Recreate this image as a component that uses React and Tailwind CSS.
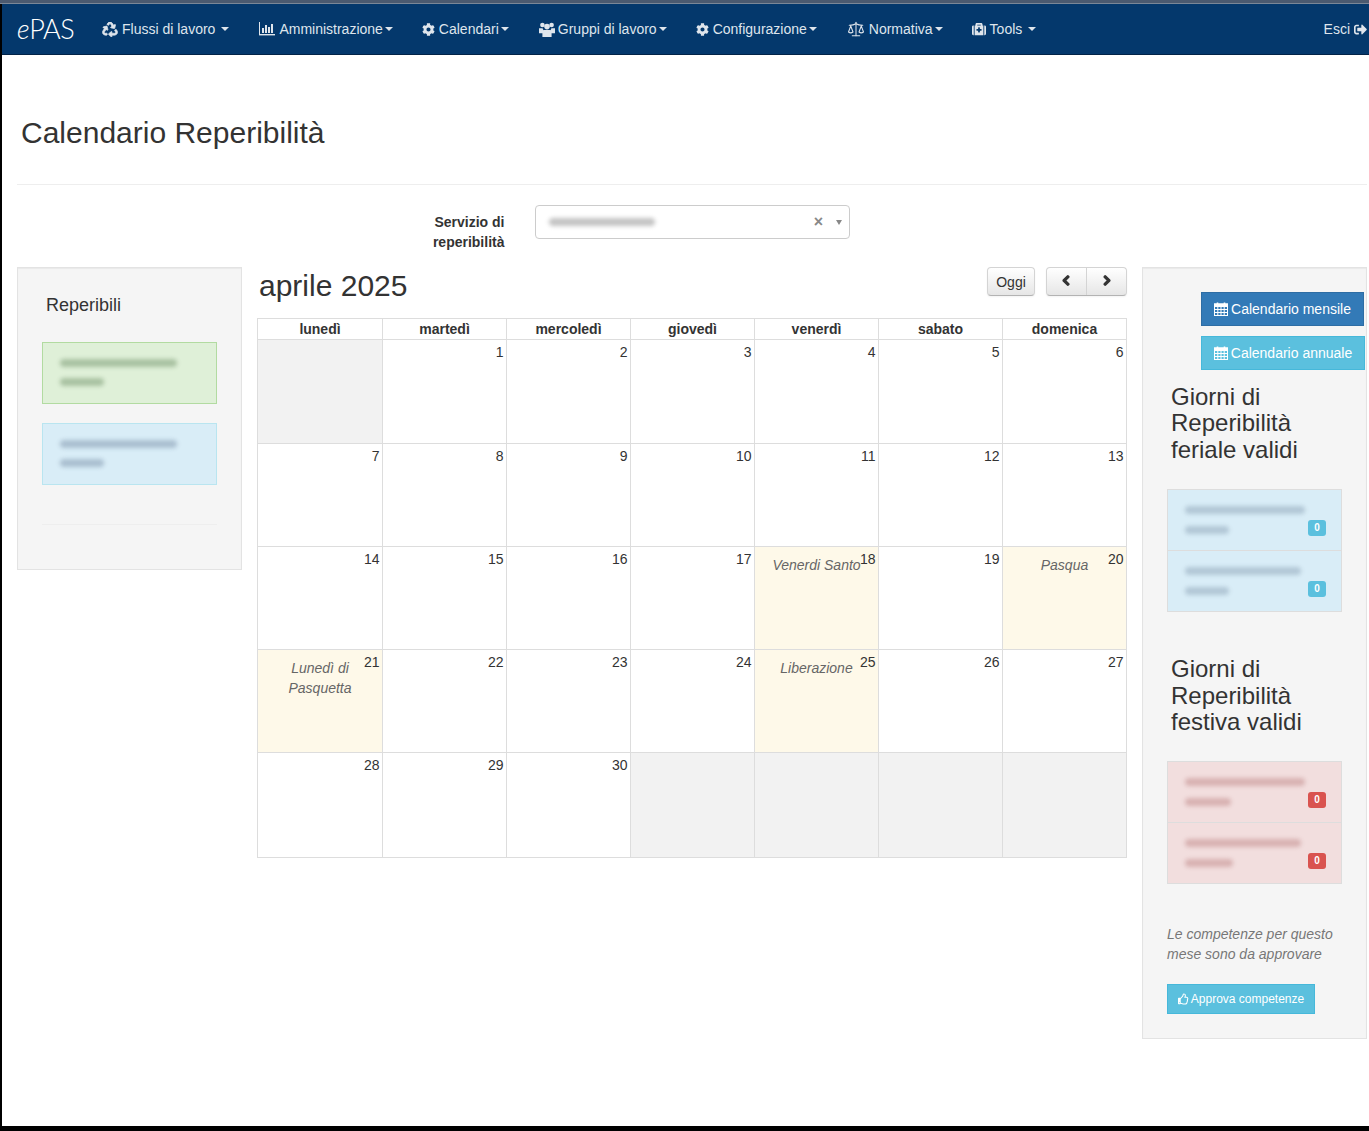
import React from "react";
import { FaRecycle, FaCog, FaMedkit, FaSignOutAlt, FaRegThumbsUp, FaChevronLeft, FaChevronRight } from "react-icons/fa";
import { Scale } from "lucide-react";

const ChartIcon = () => (
  <svg width="16" height="14" viewBox="0 0 16 14" className="fill-current">
    <rect x="0" y="0" width="1" height="12" />
    <rect x="0" y="12" width="16" height="1.4" />
    <rect x="3" y="6" width="2" height="5" />
    <rect x="6" y="3" width="2" height="8" />
    <rect x="9" y="5" width="2" height="6" />
    <rect x="12" y="2" width="2" height="9" />
  </svg>
);

const UsersIcon = () => (
  <svg width="16" height="15" viewBox="0 0 16 15" className="fill-current -mr-[1px]">
    <circle cx="3.4" cy="3" r="2.3" />
    <circle cx="12.6" cy="3" r="2.3" />
    <circle cx="8" cy="4.6" r="2.8" />
    <path d="M0 6.2h3.6l1 2.6v2.4H0z" />
    <path d="M16 6.2h-3.6l-1 2.6v2.4H16z" />
    <path d="M4.4 8h7.2l1 2.2V15H3.4v-4.8z" />
  </svg>
);

const CalendarIcon = () => (
  <svg width="14" height="14" viewBox="0 0 14 14" className="mr-[3px] stroke-current fill-none" strokeWidth="1">
    <rect x="0.5" y="2" width="13" height="11.5" />
    <rect x="0.5" y="2" width="13" height="2.5" className="fill-current" />
    <path d="M3.8 4.5v9M7 4.5v9M10.2 4.5v9M0.5 7.5h13M0.5 10.5h13" />
    <path d="M3.5 0.5v2.5M10.5 0.5v2.5" strokeWidth="1.6" />
  </svg>
);

const navItems = [
  { label: "Flussi di lavoro", icon: <FaRecycle className="w-[16px] h-[15px] stroke-current [stroke-width:25]" />, cls: "", caretGap: "ml-[6px]" },
  { label: "Amministrazione", icon: <ChartIcon />, cls: "", caretGap: "ml-[2px]" },
  { label: "Calendari", icon: <FaCog className="w-[13px] h-[13px]" />, cls: "-ml-[1px]", caretGap: "ml-[2px]" },
  { label: "Gruppi di lavoro", icon: <UsersIcon />, cls: "", caretGap: "ml-[2px]" },
  { label: "Configurazione", icon: <FaCog className="w-[13px] h-[13px]" />, cls: "-ml-[1px]", caretGap: "ml-[2px]" },
  { label: "Normativa", icon: <Scale className="w-[18px] h-[18px]" strokeWidth={1.4} />, cls: "", caretGap: "ml-[2px]" },
  { label: "Tools", icon: <FaMedkit className="w-[14px] h-[14px]" />, cls: "-ml-[1px]", caretGap: "ml-[6px]" },
];

const weekdays = ["lunedì", "martedì", "mercoledì", "giovedì", "venerdì", "sabato", "domenica"];

// null = giorno fuori mese
const days = [
  null, 1, 2, 3, 4, 5, 6,
  7, 8, 9, 10, 11, 12, 13,
  14, 15, 16, 17, 18, 19, 20,
  21, 22, 23, 24, 25, 26, 27,
  28, 29, 30, null, null, null, null,
];

const holidays = {
  18: "Venerdi Santo",
  20: "Pasqua",
  21: "Lunedì di Pasquetta",
  25: "Liberazione",
};

const Blur = ({ w, color, className = "" }) => (
  <div className={`h-[8px] rounded-full blur-[2px] ${w} ${color} ${className}`} />
);

const PersonCard = ({ bg, barColor, nameW, roleW }) => (
  <div className={`h-[62px] border pl-[17px] pt-[16px] ${bg}`}>
    <Blur w={nameW} color={barColor} />
    <Blur w={roleW} color={barColor} className="mt-[11px]" />
  </div>
);

const CountRow = ({ barColor, badge, border, height, nameW, roleW }) => (
  <div className={`relative pl-[17px] pt-[16px] ${height} ${border}`}>
    <Blur w={nameW} color={barColor} />
    <Blur w={roleW} color={barColor} className="mt-[12px]" />
    <span className={`absolute left-[140px] top-[30px] w-[18px] h-[16px] rounded-[3px] text-white text-[10px] font-bold leading-[16px] text-center ${badge}`}>
      0
    </span>
  </div>
);

const Caret = ({ className }) => (
  <span className={`inline-block w-0 h-0 border-x-[4px] border-x-transparent border-t-[4px] border-t-[#dfe5ec] ${className}`} />
);

export default function App() {
  return (
    <div className="w-[1369px] h-[1131px] bg-black pl-[2px] pb-[5px] overflow-hidden font-['Liberation_Sans',sans-serif] text-[14px] leading-[20px] text-[#333]">
      <div className="h-full bg-white relative">
        <div className="h-[4px] bg-[#4b5a70] -ml-[2px] border-b border-[#7b8797]" />
        <nav className="h-[51px] bg-[#04386c] border-b border-[#022347] flex items-center text-[#dfe5ec]">
          <div className="w-[85px] pl-[15px] text-[27px] font-['Lato',sans-serif] font-light text-white tracking-[-0.5px]">
            <span className="italic">e</span>PAS
          </div>
          {navItems.map((item) => (
            <div key={item.label} className={`px-[15px] flex items-center whitespace-pre ${item.cls}`}>
              <span className="mr-[4px]">{item.icon}</span>
              <span>{item.label}</span>
              <Caret className={item.caretGap} />
            </div>
          ))}
          <div className="ml-auto pr-[2px] flex items-center">
            Esci
            <FaSignOutAlt className="w-[13px] h-[13px] ml-[4px]" />
          </div>
        </nav>

        <div className="pl-[15px]">
          <h1 className="pt-[61px] pl-[4px] text-[30px] leading-[33px] font-normal">Calendario Reperibilità</h1>
          <div className="mt-[35px] w-[1350px] h-px bg-[#eee]" />

          <div className="mt-[20px] h-[62px] flex items-start">
            <label className="w-[487.5px] pt-[7px] text-right font-bold">
              Servizio di
              <br />
              reperibilità
            </label>
            <div className="ml-[30.5px] w-[315px] h-[34px] border border-[#ccc] rounded-[4px] flex items-center pl-[13px] pr-[7px]">
              <Blur w="w-[106px]" color="bg-[#c4c4c4]" />
              <span className="ml-auto text-[#888] font-bold text-[16px]">×</span>
              <span className="ml-[13px] w-0 h-0 border-x-[3px] border-x-transparent border-t-[5px] border-t-[#888]" />
            </div>
          </div>

          <div className="flex items-start">
            {/* Reperibili */}
            <div className="w-[225px] h-[303px] bg-[#f5f5f5] border border-[#e3e3e3] shadow-[inset_0_1px_1px_rgba(0,0,0,0.05)] px-[24px]">
              <h4 className="mt-[27px] ml-[4px] text-[18px] leading-[20px] font-normal">Reperibili</h4>
              <div className="mt-[27px]">
                <PersonCard bg="bg-[#dff0d8] border-[#b2dba1]" barColor="bg-[#a9c2a2]" nameW="w-[117px]" roleW="w-[44px]" />
              </div>
              <div className="mt-[19px]">
                <PersonCard bg="bg-[#d9edf7] border-[#b9e5f0]" barColor="bg-[#aabfd0]" nameW="w-[117px]" roleW="w-[44px]" />
              </div>
              <div className="mt-[39px] h-px bg-[#eee]" />
            </div>

            {/* Calendario */}
            <div className="ml-[15px] w-[870px]">
              <div className="h-[51px] flex items-start">
                <h2 className="pl-[2px] pt-[2px] text-[30px] leading-[33px] font-normal">aprile 2025</h2>
                <button className="ml-auto w-[48px] h-[29px] rounded-[4px] border border-[#d4d4d4] border-b-[#b3b3b3] bg-gradient-to-b from-white to-[#e6e6e6] text-[14px] shadow-[0_1px_2px_rgba(0,0,0,0.05)]">
                  Oggi
                </button>
                <div className="ml-[11px] w-[81px] h-[29px] flex rounded-[4px] border border-[#d4d4d4] border-b-[#b3b3b3] bg-gradient-to-b from-white to-[#e6e6e6] shadow-[0_1px_2px_rgba(0,0,0,0.05)]">
                  <span className="w-[40px] flex items-center justify-center border-r border-[#d4d4d4]">
                    <FaChevronLeft className="w-[10px] h-[11px] -mt-[2px] -ml-[1px] stroke-current [stroke-width:70]" />
                  </span>
                  <span className="flex-1 flex items-center justify-center">
                    <FaChevronRight className="w-[10px] h-[11px] -mt-[2px] stroke-current [stroke-width:70]" />
                  </span>
                </div>
              </div>

              <div className="grid grid-cols-[125px_repeat(6,124px)] grid-rows-[21px_104px_103px_103px_103px_105px] w-[870px] border-r border-b border-[#ddd]">
                {weekdays.map((d) => (
                  <div key={d} className="border-l border-t border-[#ddd] text-center font-bold leading-[21px]">
                    {d}
                  </div>
                ))}
                {days.map((d, i) => (
                  <div
                    key={i}
                    className={`relative border-l border-t border-[#ddd] text-right pr-[2.5px] pt-[2px] ${
                      d === null ? "bg-[#f2f2f2]" : holidays[d] ? "bg-[#fef9e9]" : "bg-white"
                    }`}
                  >
                    {d}
                    {holidays[d] && (
                      <div className="absolute inset-x-0 top-[8px] px-[15px] text-center italic text-[#666]">
                        {holidays[d]}
                      </div>
                    )}
                  </div>
                ))}
              </div>
            </div>

            {/* Colonna destra */}
            <div className="ml-[15px] w-[225px] h-[772px] bg-[#f5f5f5] border border-[#e3e3e3] shadow-[inset_0_1px_1px_rgba(0,0,0,0.05)]">
              <div className="pl-[58px] pt-[24px]">
                <button className="w-[163px] h-[34px] bg-[#337ab7] border border-[#2e6da4] text-white flex items-center justify-center">
                  <CalendarIcon />
                  Calendario mensile
                </button>
                <button className="mt-[10px] w-[164px] h-[34px] bg-[#5bc0de] border border-[#46b8da] text-white flex items-center justify-center">
                  <CalendarIcon />
                  Calendario annuale
                </button>
              </div>
              <div className="pl-[24px]">
                <h3 className="mt-[14px] pl-[4px] text-[24px] leading-[26.4px] font-normal">
                  Giorni di
                  <br />
                  Reperibilità
                  <br />
                  feriale validi
                </h3>
                <div className="mt-[26px] w-[175px] h-[123px] bg-[#d9edf7] border border-[#ddd]">
                  <CountRow barColor="bg-[#b2c7d6]" badge="bg-[#5bc0de]" border="" height="h-[60px]" nameW="w-[120px]" roleW="w-[44px]" />
                  <CountRow barColor="bg-[#b2c7d6]" badge="bg-[#5bc0de]" border="border-t border-[#ddd]" height="h-[61px]" nameW="w-[116px]" roleW="w-[44px]" />
                </div>
                <h3 className="mt-[44px] pl-[4px] text-[24px] leading-[26.4px] font-normal">
                  Giorni di
                  <br />
                  Reperibilità
                  <br />
                  festiva validi
                </h3>
                <div className="mt-[26px] w-[175px] h-[123px] bg-[#f2dede] border border-[#ddd]">
                  <CountRow barColor="bg-[#d8b2b2]" badge="bg-[#d9534f]" border="" height="h-[60px]" nameW="w-[120px]" roleW="w-[46px]" />
                  <CountRow barColor="bg-[#d8b2b2]" badge="bg-[#d9534f]" border="border-t border-[#ddd]" height="h-[61px]" nameW="w-[116px]" roleW="w-[48px]" />
                </div>
                <p className="mt-[40px] italic text-[#777] w-[180px]">
                  Le competenze per questo mese sono da approvare
                </p>
                <button className="mt-[20px] w-[148px] h-[30px] bg-[#5bc0de] border border-[#46b8da] text-white text-[12px] flex items-center justify-center">
                  <FaRegThumbsUp className="w-[11px] h-[12px] mr-[2px]" />
                  Approva competenze
                </button>
              </div>
            </div>
          </div>
        </div>
      </div>
    </div>
  );
}
